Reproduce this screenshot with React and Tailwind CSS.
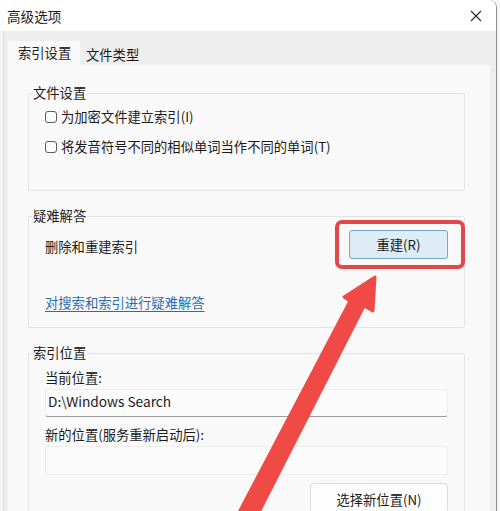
import React from "react";

const FONT = { fontFamily: '"Noto Sans CJK SC", "Noto Sans", sans-serif' };

function Checkbox({ label }) {
  return (
    <div className="flex items-center h-[20px]">
      <span className="w-[12px] h-[12px] border border-[#5c5c5c] rounded-[3px] bg-[#fbfbfb] shrink-0" />
      <span className="ml-[4px] leading-[18px]">{label}</span>
    </div>
  );
}

function Group({ title, className = "", children }) {
  return (
    <fieldset className={"border border-[#e4e4e4] rounded-[2px] p-0 m-0 min-w-0 " + className}>
      <legend className="ml-[3px] px-[1px] leading-[18px]">{title}</legend>
      {children}
    </fieldset>
  );
}

export default function App() {
  return (
    <div className="relative w-[500px] h-[511px] overflow-hidden bg-[#f6f6f6] text-[13.3px] text-[#1b1b1b]" style={FONT}>
      <div className="w-[497px] h-full border-r border-[#8e8e8e] rounded-tr-[8px] overflow-hidden flex flex-col bg-white">
        {/* title bar */}
        <div className="h-[31px] shrink-0 bg-white flex items-center justify-between pl-[7px] pr-[10px]">
          <span className="text-[13.6px] leading-[18px]">高级选项</span>
          <svg width="12" height="12" viewBox="0 0 12 12" className="mr-[4px]">
            <path d="M1 1 L11 11 M11 1 L1 11" stroke="#2a2a2a" strokeWidth="1.1" fill="none" />
          </svg>
        </div>
        {/* body */}
        <div className="flex-1 flex bg-[#f5f5f5]">
          <div className="ml-[3px] flex-1 flex flex-col bg-[#eeeeee] border-l border-[#dedede] pl-[4px] pr-[6px] pt-[10px]">
            {/* tabs */}
            <div className="flex items-end h-[24px]">
              <div className="h-[24px] w-[72px] bg-[#f9f9f9] flex items-center pl-[10px] rounded-t-[2px]">
                <span className="leading-[18px]">索引设置</span>
              </div>
              <div className="h-[21px] flex items-center pl-[6px] pr-[8px]">
                <span className="leading-[18px]">文件类型</span>
              </div>
            </div>
            {/* panel */}
            <div className="flex-1 bg-[#f9f9f9] pl-[20px] pr-[25px] pt-[19px]">
              <Group title="文件设置">
                <div className="h-[88px] pl-[16px] pt-[5px] flex flex-col gap-[10px]">
                  <Checkbox label="为加密文件建立索引(I)" />
                  <Checkbox label="将发音符号不同的相似单词当作不同的单词(T)" />
                </div>
              </Group>
              <Group title="疑难解答" className="mt-[16px]">
                <div className="h-[102px] px-[16px] pt-[5px] flex flex-col">
                  <div className="flex justify-between h-[29px]">
                    <span className="leading-[18px] pt-[8px]">删除和重建索引</span>
                    <button className="w-[99px] h-[29px] border border-[#72a9c6] bg-[#deecf8] rounded-[3px] flex items-center justify-center leading-[18px]">
                      重建(R)
                    </button>
                  </div>
                  <span className="mt-[35px] leading-[18px] text-[#2b6bb2] underline underline-offset-[3px]">
                    对搜索和索引进行疑难解答
                  </span>
                </div>
              </Group>
              <Group title="索引位置" className="mt-[16px]">
                <div className="h-[160px] px-[16px] pt-[7px] flex flex-col">
                  <span className="leading-[18px]">当前位置:</span>
                  <div className="mt-[2px] h-[28px] bg-[#fbfbfb] border border-[#ededed] border-b-[#9d9d9d] rounded-[3px] flex items-center pl-[2px] pb-[4px]">
                    <span className="leading-[18px] text-[13.7px]">D:\Windows Search</span>
                  </div>
                  <span className="mt-[9px] leading-[18px]">新的位置(服务重新启动后):</span>
                  <div className="mt-[2px] h-[29px] bg-[#fbfbfb] border border-[#ededed] rounded-[3px]" />
                  <div className="mt-[8px] flex justify-end">
                    <button className="w-[138px] h-[30px] bg-[#fdfdfd] border border-[#dcdcdc] rounded-[4px] flex items-center justify-center leading-[18px] pt-[3px]">
                      选择新位置(N)
                    </button>
                  </div>
                </div>
              </Group>
            </div>
          </div>
        </div>
      </div>

      {/* annotation: red highlight */}
      <div className="absolute left-[335px] top-[220px] w-[130px] h-[49px] border-[4px] border-[#e2474a] rounded-[7px]" />

      {/* annotation: red arrow */}
      <svg className="absolute left-0 top-0" width="500" height="511" viewBox="0 0 500 511">
        <polygon
          points="375,277 373,311 364,306 255,520 235,520 350,301 344,297"
          fill="#ef4a46"
          stroke="#ef4a46"
          strokeWidth="3"
          strokeLinejoin="round"
        />
      </svg>
    </div>
  );
}
